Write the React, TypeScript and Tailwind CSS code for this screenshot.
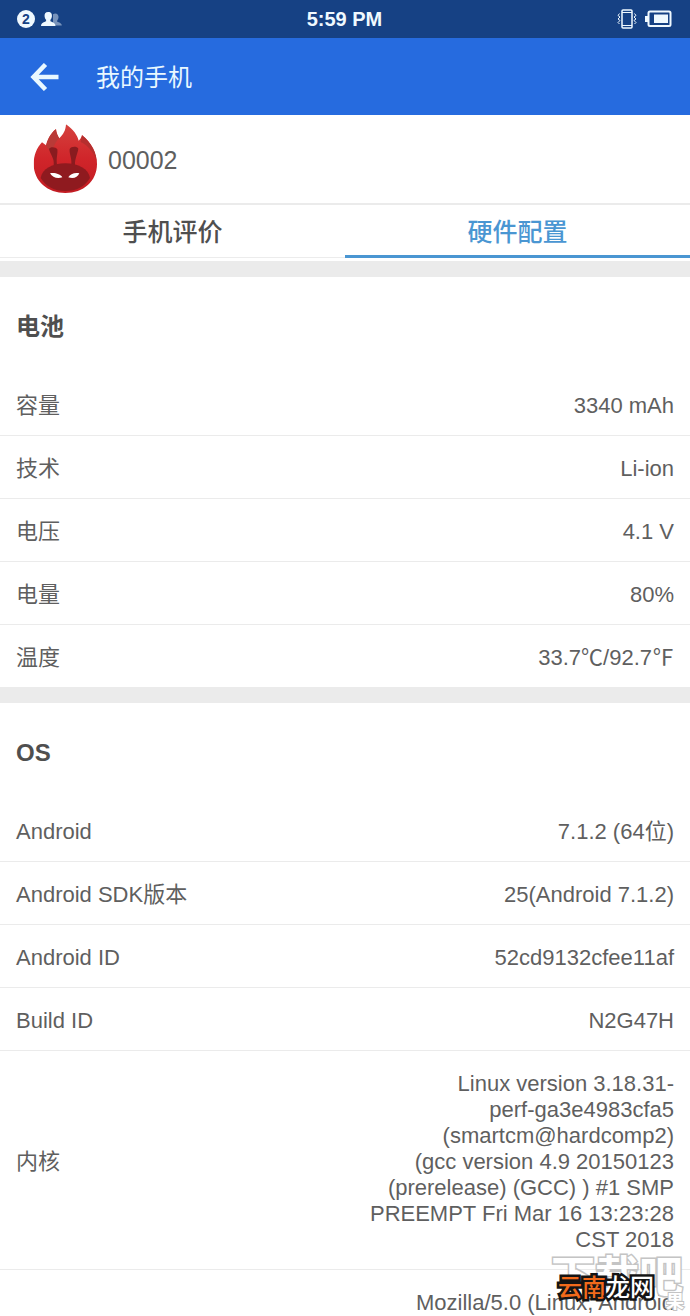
import { Fragment, useState } from "react";

const font = "font-['Liberation_Sans','Noto_Sans_CJK_SC',sans-serif]";

const tabs = ["手机评价", "硬件配置"];

const sections = [
  {
    title: "电池",
    rows: [
      { label: "容量", lines: ["3340 mAh"] },
      { label: "技术", lines: ["Li-ion"] },
      { label: "电压", lines: ["4.1 V"] },
      { label: "电量", lines: ["80%"] },
      { label: "温度", lines: ["33.7℃/92.7℉"] },
    ],
  },
  {
    title: "OS",
    rows: [
      { label: "Android", lines: ["7.1.2 (64位)"] },
      { label: "Android SDK版本", lines: ["25(Android 7.1.2)"] },
      { label: "Android ID", lines: ["52cd9132cfee11af"] },
      { label: "Build ID", lines: ["N2G47H"] },
      {
        label: "内核",
        lines: [
          "Linux version 3.18.31-",
          "perf-ga3e4983cfa5",
          "(smartcm@hardcomp2)",
          "(gcc version 4.9 20150123",
          "(prerelease) (GCC) ) #1 SMP",
          "PREEMPT Fri Mar 16 13:23:28",
          "CST 2018",
        ],
      },
      { label: "", lines: ["Mozilla/5.0 (Linux; Android"] },
    ],
  },
];

function StatusBar() {
  return (
    <div className="grid h-[38px] shrink-0 grid-cols-3 items-center bg-[#164184] pr-[18px] pl-[17px] text-[#f0f9ff]">
      <div className="flex items-center gap-1.5">
        <span className="flex size-[18px] items-center justify-center rounded-full bg-[#f0f9ff] text-[14px] font-bold text-[#164184]">
          2
        </span>
        <svg width="21" height="16" viewBox="0 0 21 16" fill="currentColor">
          <path
            opacity="0.45"
            d="M14 2.500c2.600 0 3.800 1.800 3.500 4-.2 1.500-.8 2.200-1.300 3v1.300c1.800.8 4.500 1.200 4.600 3.700H12V3.200z"
          />
          <path d="M7.200 1c3 0 4 2 3.700 4.400-.2 1.600-.8 2.600-1.500 3.300v1.600c1.900 1 4.900 1.500 5.100 4.700H0c.2-3.200 3.200-3.700 5.100-4.700V8.700c-.7-.7-1.300-1.700-1.500-3.300C3.300 3 4.300 1 7.200 1z" />
        </svg>
      </div>
      <span className="text-center text-xl leading-6 font-bold">5:59 PM</span>
      <div className="flex items-center justify-end gap-2">
        <svg width="20" height="20" viewBox="0 0 20 20" fill="none" stroke="currentColor">
          <rect x="5" y="1" width="10" height="18" rx="1" strokeWidth="1.500" />
          <path d="M5 3.500h10M5 16.500h10" />
          <path d="M2.500 4.500l-1.500 2 2 1.500-2 2 2 1.500-2 2 1.500 1.500M17.500 4.500l1.500 2-2 1.500 2 2-2 1.500 2 2-1.500 1.500" />
        </svg>
        <svg width="27" height="18" viewBox="0 0 27 18" fill="none">
          <rect x="3.500" y="1.500" width="22" height="14.500" rx="1.500" stroke="currentColor" strokeWidth="2" />
          <path d="M0 6h3v6H0z" fill="currentColor" />
          <path d="M9 4.500h14V13H9z" fill="currentColor" />
        </svg>
      </div>
    </div>
  );
}

function AntutuLogo() {
  return (
    <svg width="65" height="70" viewBox="39 28 195 210" aria-hidden="true">
      <defs>
        <linearGradient id="flame" x1="0" y1="0" x2="0" y2="1">
          <stop offset="0" stopColor="#d5413d" />
          <stop offset="0.500" stopColor="#d0252a" />
          <stop offset="1" stopColor="#c21b22" />
        </linearGradient>
        <clipPath id="body">
          <path d="M66 83L78 92C82 75 92 55 108 43C110 56 113 63 118 71C130 59 137 48 138 29C160 44 172 62 176 78C181 74 184 69 186 61C215 84 231 115 231 148C231 200 190 235 136 235C84 235 41 200 41 148C41 122 50 100 66 83Z" />
        </clipPath>
      </defs>
      <g clipPath="url(#body)">
        <path d="M39 28h195v210H39z" fill="url(#flame)" />
        <path d="M78 92C82 75 92 55 108 43C110 56 113 63 118 71C109 79 104 88 101 98L84 104Z" fill="#b93a37" />
        <path d="M186 61C215 84 231 115 231 148C228 120 205 92 182 82Z" fill="#b52f2e" />
        <path d="M87 103C90 95 108 96 112 104C114 117 108 129 111 150L101 152C104 131 91 120 87 103Z" fill="#8a1b1f" />
        <path d="M149 103C153 95 171 94 175 102C173 118 164 131 165 152L154 150C156 130 147 117 149 103Z" fill="#8a1b1f" />
        <path d="M62 190C66 163 98 146 136 146C174 146 206 163 210 190C194 216 170 229 136 229C103 229 78 216 62 190Z" fill="#8f1a1f" />
        <path d="M90 176C105 173 121 179 127 188C112 194 97 188 90 176Z" fill="#fff" />
        <path d="M178 176C163 173 150 179 145 188C160 194 173 188 178 176Z" fill="#fff" />
      </g>
    </svg>
  );
}

function Watermark() {
  return (
    <div className="pointer-events-none absolute right-[6px] bottom-0 h-[66px] w-[133px] font-['Noto_Sans_CJK_SC',sans-serif] font-bold whitespace-nowrap select-none">
      <span className="absolute top-0 left-0 text-[44px] leading-[48px] text-white [-webkit-text-stroke:3px_#c4c4c4] [paint-order:stroke_fill]">
        下载吧
      </span>
      <span className="absolute right-0 bottom-[6px] text-lg leading-5 text-white [-webkit-text-stroke:2px_#c4c4c4] [paint-order:stroke_fill]">
        果
      </span>
      <span className="absolute top-[20px] left-[7px] text-2xl leading-8 font-medium text-white [-webkit-text-stroke:5px_#141414] [paint-order:stroke_fill]">
        <span className="text-[#f26a1b]">云南</span>龙网
      </span>
    </div>
  );
}

export default function App() {
  const [active, setActive] = useState(1);

  return (
    <div className={`relative flex h-screen flex-col overflow-hidden bg-white text-[22px] leading-[26px] text-[#5f5f5f] ${font}`}>
      <StatusBar />

      <header className="flex h-[77px] shrink-0 items-center gap-9 bg-[#266bdf] pl-[30px] text-[#e9f8ff]">
        <button type="button" aria-label="返回">
          <svg width="30" height="28" viewBox="0 0 30 28" fill="none" stroke="currentColor" strokeWidth="4.500">
            <path d="M28.500 14H4M15.500 1.500L3.500 14l12 12.500" />
          </svg>
        </button>
        <h1 className="pt-0.5 text-2xl">我的手机</h1>
      </header>

      <div className="flex h-[90px] shrink-0 items-center gap-[10px] border-b-2 border-[#ebebeb] pl-[33px]">
        <AntutuLogo />
        <span className="pt-0.5 text-[25px] leading-8">00002</span>
      </div>

      <nav role="tablist" className="grid h-[53px] shrink-0 grid-cols-2">
        {tabs.map((tab, i) => (
          <button
            key={tab}
            type="button"
            role="tab"
            aria-selected={active === i}
            onClick={() => setActive(i)}
            className={
              active === i
                ? "border-b-[3px] border-[#4a96d2] pt-1 text-[25px] font-medium text-[#4a96d2]"
                : "border-b border-[#ececec] pt-0.5 text-[25px] font-medium text-[#4f4f4f]"
            }
          >
            {tab}
          </button>
        ))}
      </nav>

      <main className="mt-[3px] min-h-0 flex-1 overflow-hidden">
        {sections.map((section) => (
          <section key={section.title} className="border-t-16 border-[#ebebeb]">
            <h2 className="px-4 pt-[34px] pb-[30px] text-2xl leading-8 font-bold text-[#4f4f4f]">{section.title}</h2>
            <dl className="divide-y divide-[#ebebeb]">
              {section.rows.map((row) => (
                <div key={row.label} className="flex items-center justify-between gap-4 px-4 pt-5 pb-4">
                  <dt>{row.label}</dt>
                  <dd className="text-right">
                    {row.lines.map((line, i) => (
                      <Fragment key={line}>
                        {i > 0 && <br />}
                        {line}
                      </Fragment>
                    ))}
                  </dd>
                </div>
              ))}
            </dl>
          </section>
        ))}
      </main>

      <Watermark />
    </div>
  );
}
